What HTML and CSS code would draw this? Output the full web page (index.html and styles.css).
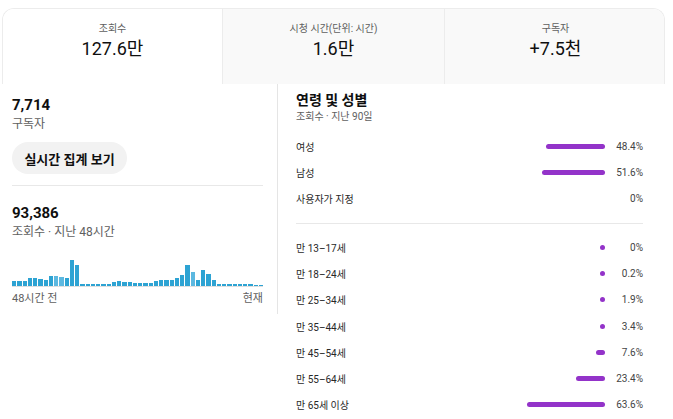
FILE: index.html
```html
<!DOCTYPE html>
<html lang="ko">
<head>
    <meta charset="UTF-8">
    <title>채널 분석</title>
    <link rel="stylesheet" href="styles.css">
</head>
<body>
    <div class="tabs">
        <div class="tab active">
            <div class="tab-label">조회수</div>
            <div class="tab-value">127.6만</div>
        </div>
        <div class="tab">
            <div class="tab-label">시청 시간(단위: 시간)</div>
            <div class="tab-value">1.6만</div>
        </div>
        <div class="tab">
            <div class="tab-label">구독자</div>
            <div class="tab-value">+7.5천</div>
        </div>
    </div>

    <div class="main">
        <div class="left">
            <div class="big">7,714</div>
            <div class="sub">구독자</div>
            <button class="pill">실시간 집계 보기</button>
            <div class="divider"></div>
            <div class="big realtime">93,386</div>
            <div class="sub">조회수 · 지난 48시간</div>
            <div class="chart" id="chart"></div>
            <div class="axis">
                <span>48시간 전</span>
                <span>현재</span>
            </div>
        </div>

        <div class="right">
            <div class="heading">연령 및 성별</div>
            <div class="caption">조회수 · 지난 90일</div>
            <div class="rows first" id="gender"></div>
            <div class="divider wide"></div>
            <div class="rows" id="ages"></div>
        </div>
    </div>

<script>
    // views per hour, last 48 hours
    var hours = [5,5,5.5,8,8,7,6,10,10,9,8,26,21,2,2,2.5,2.5,2,2.5,4,5,4,4,3.5,
                 3.5,3.5,3.5,5,6,6,6,8,11,21,14,6,16,12,6,2,2,2.5,2.5,2.5,2,2,1.5,1];
    var lighter = [8, 9, 34];
    var chart = document.getElementById('chart');
    for (var i = 0; i < hours.length; i++) {
        var b = document.createElement('div');
        b.className = lighter.includes(i) ? 'bar light' : 'bar';
        b.style.height = hours[i] + 'px';
        chart.appendChild(b);
    }

    function addRows(id, list) {
        var box = document.getElementById(id);
        for (var i = 0; i < list.length; i++) {
            var row = document.createElement('div');
            row.className = 'row';
            var w = list[i][1] == null ? 0 : Math.max(5, list[i][1] * 1.22);
            var bar = list[i][1] == null ? '' : '<span class="fill" style="width:' + w + 'px"></span>';
            row.innerHTML = '<span class="name">' + list[i][0] + '</span>' +
                '<span class="track">' + bar + '</span>' +
                '<span class="pct">' + list[i][2] + '</span>';
            box.appendChild(row);
        }
    }

    addRows('gender', [
        ['여성', 48.4, '48.4%'],
        ['남성', 51.6, '51.6%'],
        ['사용자가 지정', null, '0%']
    ]);
    addRows('ages', [
        ['만 13–17세', 0, '0%'],
        ['만 18–24세', 0.2, '0.2%'],
        ['만 25–34세', 1.9, '1.9%'],
        ['만 35–44세', 3.4, '3.4%'],
        ['만 45–54세', 7.6, '7.6%'],
        ['만 55–64세', 23.4, '23.4%'],
        ['만 65세 이상', 63.6, '63.6%']
    ]);
</script>
</body>
</html>
```

FILE: styles.css
```css
body {
    margin: 0;
    background: #fff;
    color: #0f0f0f;
    font-family: Roboto, "Noto Sans CJK KR", sans-serif;
}

.tabs {
    margin: 8px 0 0 2px;
    width: 663px;
    height: 76px;
    display: grid;
    grid-template-columns: 219px 222px 222px;
    border: 1px solid #ececec;
    border-bottom: none;
    border-radius: 12px 12px 0 0;
    overflow: hidden;
    box-sizing: border-box;
}

.tab {
    background: #f9f9f9;
    border-left: 1px solid #ececec;
    text-align: center;
    padding-top: 13px;
}

.tab.active {
    background: #fff;
    border-left: none;
}

.tab-label {
    font-size: 10px;
    line-height: 14px;
    color: #606060;
}

.tab-value {
    font-size: 18px;
    line-height: 24px;
    margin-top: 1px;
}

.main {
    display: flex;
}

.left {
    width: 265px;
    padding: 11px 0 0 12px;
    box-sizing: content-box;
    border-right: 1px solid #e5e5e5;
    height: 219px;
}

.left > * {
    width: 251px;
}

.big {
    font-size: 15px;
    font-weight: 700;
    line-height: 20px;
}

.sub {
    font-size: 12px;
    line-height: 19px;
    color: #606060;
}

.pill {
    display: block;
    width: 115px;
    height: 32px;
    margin-top: 8px;
    border: none;
    border-radius: 16px;
    background: #f2f2f2;
    font-family: inherit;
    font-size: 13px;
    font-weight: 700;
    color: #0f0f0f;
    padding: 0;
}

.divider {
    height: 1px;
    background: #e8e8e8;
    margin-top: 11px;
}

.realtime {
    margin-top: 17px;
}

.chart {
    margin-top: 14px;
    height: 30px;
    display: flex;
    align-items: flex-end;
    gap: 1px;
    border-bottom: 1px solid #e0e0e0;
}

.bar {
    flex: 1;
    background: #2da3d3;
}

.bar.light {
    background: #5cb8e0;
}

.axis {
    display: flex;
    justify-content: space-between;
    margin-top: 5px;
    font-size: 11px;
    line-height: 14px;
    color: #606060;
}

.right {
    padding: 6px 0 0 18px;
    width: 347px;
}

.heading {
    font-size: 14px;
    font-weight: 700;
    line-height: 20px;
}

.caption {
    font-size: 10px;
    line-height: 14px;
    color: #606060;
}

.rows {
    margin-top: 10px;
}

.rows.first {
    margin-top: 9px;
    margin-bottom: 12px;
}

.divider.wide {
    margin-top: 0;
}

.row {
    display: flex;
    align-items: center;
    height: 26.3px;
    font-size: 10px;
    color: #282828;
}

.rows.first .row {
    height: 26px;
}

.name {
    flex: 1;
}

.track {
    width: 130px;
    display: flex;
    justify-content: flex-end;
}

.fill {
    height: 5px;
    border-radius: 3px;
    background: #9333c9;
}

.pct {
    width: 38px;
    text-align: right;
    color: #444;
}
```
